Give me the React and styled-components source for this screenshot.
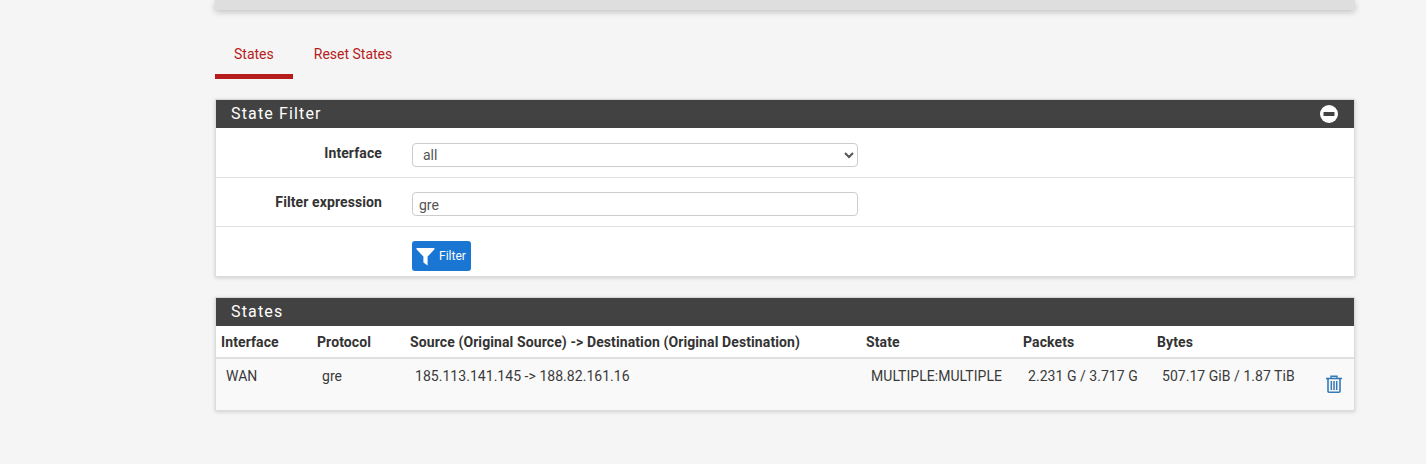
import React from "react";
import styled, { createGlobalStyle } from "styled-components";

const GlobalStyle = createGlobalStyle`
  html, body {
    margin: 0;
    padding: 0;
    background: #f5f5f5;
    overflow: hidden;
  }
  body {
    font-family: Roboto, "Liberation Sans", sans-serif;
    font-size: 14px;
    color: #333;
  }
`;

const Page = styled.div`
  width: 1140px;
  height: 464px;
  margin-left: 215px;
`;

const TopPanel = styled.div`
  height: 10px;
  background: #dedede;
  box-shadow: 0 2px 6px rgba(0, 0, 0, 0.22);
`;

const Tabs = styled.ul`
  display: flex;
  list-style: none;
  margin: 20px 0;
  padding: 0;
  height: 49px;
`;

const Tab = styled.li`
  height: 49px;
  box-sizing: border-box;
  padding: 16px 19px 0;
  line-height: 16px;
  font-size: 14px;
  color: #b71c1c;
  border-bottom: 5px solid ${(p) => (p.$active ? "#b71c1c" : "transparent")};
  margin-right: ${(p) => (p.$active ? "2px" : "0")};
`;

const Panel = styled.section`
  background: #fff;
  border: 1px solid #dcdcdc;
  border-top-color: #d8d8d8;
  box-shadow: 0 1px 4px rgba(0, 0, 0, 0.16);
  margin-bottom: 20px;
`;

const Heading = styled.div`
  display: flex;
  align-items: center;
  justify-content: space-between;
  box-sizing: border-box;
  height: 28px;
  padding: 0 16px 2px 15px;
  background: #424242;
  color: #fff;
  font-size: 16px;
  font-weight: 400;
  letter-spacing: 1.15px;
`;

const CollapseIcon = styled.svg`
  width: 18px;
  height: 18px;
  margin-top: 2px;
`;

const FormRow = styled.div`
  display: grid;
  grid-template-columns: 166px 446px;
  column-gap: 30px;
  align-items: start;
  box-sizing: border-box;
  height: ${(p) => (p.$last ? "50px" : "49px")};
  padding-top: ${(p) => (p.$first ? "15px" : "14px")};
  border-top: ${(p) => (p.$first ? "none" : "1px solid #e0e0e0")};
`;

const Label = styled.label`
  text-align: right;
  font-weight: 700;
  line-height: 20px;
  font-size: 14px;
  letter-spacing: 0.1px;
  color: #333;
`;

const Select = styled.select`
  grid-column: 2;
  width: 446px;
  height: 24px;
  box-sizing: border-box;
  padding: 0 6px;
  font-family: Roboto, "Liberation Sans", sans-serif;
  font-size: 14px;
  color: #555;
  background: #fff;
  border: 1px solid #ccc;
  border-radius: 4px;
`;

const Input = styled.input`
  width: 446px;
  height: 24px;
  box-sizing: border-box;
  padding: 2px 6px 0;
  font-family: Roboto, "Liberation Sans", sans-serif;
  font-size: 14px;
  color: #555;
  background: #fff;
  border: 1px solid #ccc;
  border-radius: 4px;
  outline: none;
`;

const Button = styled.button`
  grid-column: 2;
  display: inline-flex;
  align-items: center;
  gap: 4px;
  width: 59px;
  height: 30px;
  padding: 0 0 0 4px;
  color: #fff;
  background: #1976d2;
  border: none;
  border-radius: 3px;
  font-family: Roboto, "Liberation Sans", sans-serif;
  font-size: 12px;
`;

const Table = styled.table`
  width: 100%;
  border-collapse: collapse;
  table-layout: fixed;
  font-size: 14px;
  letter-spacing: 0.1px;
`;

const Th = styled.th`
  width: ${(p) => p.$w}px;
  height: 32px;
  padding: 0 0 0 5px;
  box-sizing: border-box;
  text-align: left;
  font-weight: 700;
  color: #333;
  border-bottom: 2px solid #e0e0e0;
`;

const Row = styled.tr`
  background: #f9f9f9;
`;

const Td = styled.td`
  height: 52px;
  padding: 9px 0 0 10px;
  box-sizing: border-box;
  vertical-align: top;
  line-height: 16px;
  letter-spacing: 0.04px;
  color: #3a3a3a;
`;

const TrashCell = styled.td`
  padding: 16px 0 0 10px;
  box-sizing: border-box;
  vertical-align: top;
  text-align: left;
`;

const MinusIcon = () => (
  <CollapseIcon viewBox="0 0 18 18">
    <circle cx="9" cy="9" r="9" fill="#fff" />
    <rect x="3.5" y="7" width="11" height="4" rx="0.5" fill="#424242" />
  </CollapseIcon>
);

const FilterIcon = () => (
  <svg width="19" height="19" viewBox="0 0 19 19">
    <path d="M0.5 1h18v1.2L11.6 9.6V18.5L7.4 15.6V9.6L0.5 2.2z" fill="#fff" />
  </svg>
);

const TrashIcon = () => (
  <svg width="16" height="18" viewBox="0 0 16 18" fill="none" stroke="#337ab7">
    <path d="M0 3.5h16" strokeWidth="1.6" />
    <path d="M5 3V1.2h6V3" strokeWidth="1.4" />
    <path d="M2 4v12.2c0 .6.4 1 1 1h10c.6 0 1-.4 1-1V4" strokeWidth="1.6" />
    <path d="M5.3 6v9M8 6v9M10.7 6v9" strokeWidth="1.5" />
  </svg>
);

const columns = [
  ["Interface", 96],
  ["Protocol", 93],
  ["Source (Original Source) -> Destination (Original Destination)", 456],
  ["State", 157],
  ["Packets", 134],
  ["Bytes", 164],
  ["", 38],
];

const App = () => {
  return (
    <>
      <GlobalStyle />
      <Page>
        <TopPanel />
        <Tabs>
          <Tab $active>States</Tab>
          <Tab>Reset States</Tab>
        </Tabs>
        <Panel>
          <Heading>
            State Filter
            <MinusIcon />
          </Heading>
          <FormRow $first>
            <Label>Interface</Label>
            <Select defaultValue="all">
              <option value="all">all</option>
            </Select>
          </FormRow>
          <FormRow>
            <Label>Filter expression</Label>
            <Input defaultValue="gre" />
          </FormRow>
          <FormRow $last>
            <Button>
              <FilterIcon />
              Filter
            </Button>
          </FormRow>
        </Panel>
        <Panel>
          <Heading>States</Heading>
          <Table>
            <thead>
              <tr>
                {columns.map(([name, w]) => (
                  <Th key={name} $w={w}>
                    {name}
                  </Th>
                ))}
              </tr>
            </thead>
            <tbody>
              <Row>
                <Td>WAN</Td>
                <Td>gre</Td>
                <Td>185.113.141.145 -&gt; 188.82.161.16</Td>
                <Td>MULTIPLE:MULTIPLE</Td>
                <Td>2.231 G / 3.717 G</Td>
                <Td>507.17 GiB / 1.87 TiB</Td>
                <TrashCell>
                  <TrashIcon />
                </TrashCell>
              </Row>
            </tbody>
          </Table>
        </Panel>
      </Page>
    </>
  );
};

export default App;
